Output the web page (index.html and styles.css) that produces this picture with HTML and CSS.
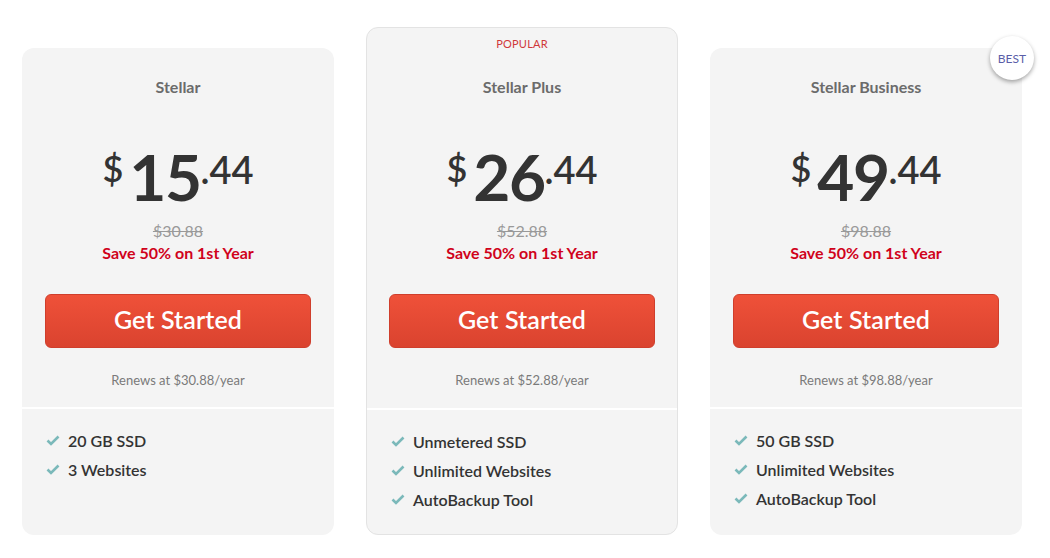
FILE: index.html
```html
<!DOCTYPE html>
<html>
<head>
<meta charset="utf-8">
<link rel="stylesheet" href="styles.css">
</head>
<body>
<div class="plans">
  <div class="card">
    <div class="head">
      <div class="title">Stellar</div>
      <div class="price"><span class="cur">$</span><span class="main">15</span><span class="cents">.44</span></div>
      <div class="old">$30.88</div>
      <div class="save">Save 50% on 1st Year</div>
      <a class="btn">Get Started</a>
      <div class="renew">Renews at $30.88/year</div>
    </div>
    <ul class="features">
      <li><svg class="chk" viewBox="0 0 14 11"><polyline points="1.5,5.5 5,9 12.5,1.5"/></svg>20 GB SSD</li>
      <li><svg class="chk" viewBox="0 0 14 11"><polyline points="1.5,5.5 5,9 12.5,1.5"/></svg>3 Websites</li>
    </ul>
  </div>
  <div class="card card--popular">
    <div class="head">
      <div class="popular">POPULAR</div>
      <div class="title">Stellar Plus</div>
      <div class="price"><span class="cur">$</span><span class="main">26</span><span class="cents">.44</span></div>
      <div class="old">$52.88</div>
      <div class="save">Save 50% on 1st Year</div>
      <a class="btn">Get Started</a>
      <div class="renew">Renews at $52.88/year</div>
    </div>
    <ul class="features">
      <li><svg class="chk" viewBox="0 0 14 11"><polyline points="1.5,5.5 5,9 12.5,1.5"/></svg>Unmetered SSD</li>
      <li><svg class="chk" viewBox="0 0 14 11"><polyline points="1.5,5.5 5,9 12.5,1.5"/></svg>Unlimited Websites</li>
      <li><svg class="chk" viewBox="0 0 14 11"><polyline points="1.5,5.5 5,9 12.5,1.5"/></svg>AutoBackup Tool</li>
    </ul>
  </div>
  <div class="card">
    <div class="badge">BEST</div>
    <div class="head">
      <div class="title">Stellar Business</div>
      <div class="price"><span class="cur">$</span><span class="main">49</span><span class="cents">.44</span></div>
      <div class="old">$98.88</div>
      <div class="save">Save 50% on 1st Year</div>
      <a class="btn">Get Started</a>
      <div class="renew">Renews at $98.88/year</div>
    </div>
    <ul class="features">
      <li><svg class="chk" viewBox="0 0 14 11"><polyline points="1.5,5.5 5,9 12.5,1.5"/></svg>50 GB SSD</li>
      <li><svg class="chk" viewBox="0 0 14 11"><polyline points="1.5,5.5 5,9 12.5,1.5"/></svg>Unlimited Websites</li>
      <li><svg class="chk" viewBox="0 0 14 11"><polyline points="1.5,5.5 5,9 12.5,1.5"/></svg>AutoBackup Tool</li>
    </ul>
  </div>
</div>
</body>
</html>
```

FILE: styles.css
```css
* { box-sizing: border-box; }
html, body { margin: 0; padding: 0; background: #fff; }
body {
  font-family: Lato, "Open Sans", "Liberation Sans", sans-serif;
  width: 1050px;
  height: 558px;
  overflow: hidden;
}
.plans {
  display: flex;
  align-items: flex-end;
  gap: 32px;
  padding: 0 0 0 22px;
  height: 535px;
}
.card {
  position: relative;
  width: 312px;
  height: 487px;
  background: #f4f4f4;
  border-radius: 12px;
  display: flex;
  flex-direction: column;
}
.card--popular {
  height: 508px;
  border: 1px solid #e3e3e3;
}
.head {
  display: flex;
  flex-direction: column;
  align-items: center;
  padding: 29px 0 19px;
}
.card--popular .head { padding-top: 9px; padding-bottom: 20px; }
.popular {
  font-size: 11px;
  line-height: 14px;
  color: #d0383a;
  letter-spacing: 0.2px;
  margin-bottom: 26px;
}
.title {
  font-size: 16px;
  line-height: 20px;
  font-weight: 700;
  color: #6b6b6b;
}
.price {
  display: flex;
  align-items: flex-start;
  justify-content: center;
  margin-top: 49px;
  color: #333;
  height: 64px;
}
.cur {
  font-size: 36px;
  line-height: 1;
  margin-top: 4px;
  margin-right: 6px;
  font-weight: 600;
}
.main {
  font-size: 64px;
  line-height: 1;
  font-weight: 700;
  letter-spacing: -1.5px;
  margin-top: -1px;
}
.cents {
  font-size: 38px;
  line-height: 1;
  margin-top: 4px;
  font-weight: 600;
}
.old {
  margin-top: 10px;
  font-size: 16px;
  line-height: 22px;
  color: #999;
  text-decoration: line-through;
}
.save {
  font-size: 16px;
  line-height: 22px;
  color: #d0021b;
  font-weight: 700;
}
.btn {
  margin-top: 30px;
  width: 266px;
  height: 54px;
  padding-bottom: 5px;
  border-radius: 6px;
  border: 1px solid #cf3e2c;
  background: linear-gradient(#ef5139, #da432f);
  color: #fff;
  font-size: 25px;
  font-weight: 600;
  display: flex;
  align-items: center;
  justify-content: center;
  letter-spacing: 0.1px;
}
.renew {
  margin-top: 24px;
  font-size: 13px;
  line-height: 16px;
  color: #7a7a7a;
}
.features {
  list-style: none;
  margin: 0;
  padding: 17px 0 0 24px;
  border-top: 2px solid #fff;
  flex: 1;
}
.features li {
  display: flex;
  align-items: center;
  height: 29px;
  font-size: 16px;
  font-weight: 600;
  color: #333;
}
.chk {
  width: 14px;
  height: 11px;
  margin-right: 8px;
  fill: none;
  stroke: #7bb9ba;
  stroke-width: 2.6;
}
.badge {
  position: absolute;
  top: -12px;
  right: -12px;
  width: 44px;
  height: 44px;
  border-radius: 50%;
  background: #fff;
  box-shadow: 0 2px 4px rgba(0,0,0,0.35);
  display: flex;
  align-items: center;
  justify-content: center;
  font-size: 12px;
  color: #5a5ea8;
}
```
